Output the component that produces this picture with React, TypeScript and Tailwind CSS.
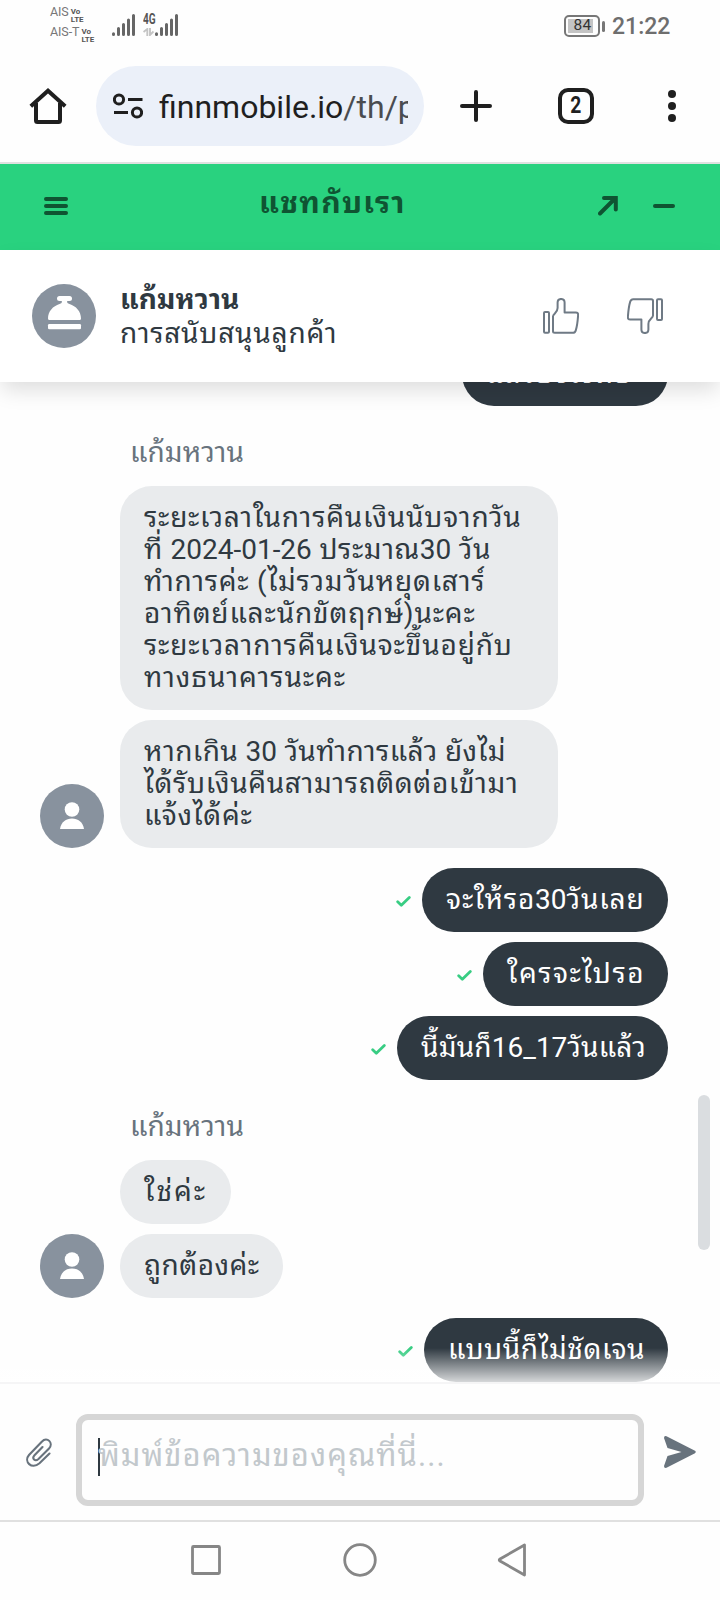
import React from "react";

function Signal() {
  return (
    <svg className="block h-[22px] w-[23px]" viewBox="0 0 23 22" stroke="#666" strokeWidth="3" strokeLinecap="round">
      <path d="M1.500 19.800v.7M6.500 14.500v6M11.500 10.500v10M16.500 6v14.500M21.500 1.500v19" />
    </svg>
  );
}

function Carrier({ name }: { name: string }) {
  return (
    <div className="flex h-5 items-start">
      <span className="text-[12.500px] leading-4 tracking-[-0.1px]">{name}</span>
      <span className="ml-[2px] pt-1 text-[8px] font-bold leading-[7.500px] text-[#555]">
        <span className="block">Vo</span>
        <span className="block">LTE</span>
      </span>
    </div>
  );
}

function StatusBar() {
  return (
    <div className="flex h-12 items-start pl-[50px] text-[#777]">
      <div className="w-[62px] pt-1">
        <Carrier name="AIS" />
        <Carrier name="AIS-T" />
      </div>
      <div className="mt-[14px]">
        <Signal />
      </div>
      <div className="ml-2 mt-[13px] w-3">
        <div className="h-3 origin-left scale-x-[0.72] text-[14px] font-bold leading-3 text-[#555]">4G</div>
        <svg className="mt-[3px] block h-2 w-[11px]" viewBox="0 0 11 8" fill="none" stroke="#c4c4c4" strokeWidth="1.900">
          <path d="M4.300 8V1L.5 4M7 0v7l3.500-3.500" />
        </svg>
      </div>
      <div className="mt-[14px]">
        <Signal />
      </div>
      <div className="ml-[386px] mt-[15px] flex items-center">
        <div className="flex h-[22px] w-9 rounded-[5px] border-2 border-[#777] p-[2px]">
          <div className="flex h-[14px] w-[25px] items-center justify-center bg-[#c4c4c4] pl-1 text-[15.500px] tracking-[0.4px] text-[#333]">84</div>
        </div>
        <div className="ml-[2px] h-[11px] w-[3px] rounded bg-[#777]" />
      </div>
      <div className="ml-[7px] mt-[13px] text-[23px] font-medium leading-[27px] text-[#6e6e6e]">21:22</div>
    </div>
  );
}

function Toolbar() {
  return (
    <div className="flex h-[114px] items-start pt-[18px]">
      <svg className="ml-[28px] mt-5 h-10 w-10" viewBox="0 0 40 40" fill="none" stroke="#1f1f1f" strokeWidth="4" strokeLinejoin="round">
        <path d="M8 17v17.500q0 1.500 1.500 1.500h21q1.500 0 1.500-1.500V17" />
        <path d="M2.800 20.200 20 4.800l17.200 15.400" strokeLinejoin="miter" />
      </svg>
      <div className="ml-7 flex h-20 w-[328px] items-center rounded-full bg-[#ebf0f9] pl-[17px]">
        <svg className="h-[26px] w-[30px]" viewBox="0 0 30 26" fill="none" stroke="#1f1f1f" strokeWidth="3">
          <circle cx="6" cy="6.500" r="4.600" />
          <path d="M15 6.500h14.500M1 19.500h14" />
          <circle cx="24" cy="19.500" r="4.600" />
        </svg>
        <div className="ml-4 mt-0.5 w-[249px] overflow-hidden whitespace-nowrap text-[32px] leading-[42px] text-[#1f1f1f]">
          finnmobile.io<span className="text-[#4a4c50]">/th/p</span>
        </div>
      </div>
      <svg className="ml-9 mt-6 h-8 w-8" viewBox="0 0 32 32" stroke="#1f1f1f" strokeWidth="4" strokeLinecap="round">
        <path d="M16 2v28M2 16h28" />
      </svg>
      <div className="ml-[66px] mt-[22px] flex h-9 w-9 items-center justify-center rounded-[10px] border-4 border-[#1f1f1f] text-[23.500px] font-bold text-[#1f1f1f]">
        <span className="scale-x-[0.82]">2</span>
      </div>
      <svg className="ml-[74px] mt-[22px] h-9 w-2" viewBox="0 0 8 36" fill="#1f1f1f">
        <circle cx="4" cy="6" r="4" />
        <circle cx="4" cy="18" r="4" />
        <circle cx="4" cy="30" r="4" />
      </svg>
    </div>
  );
}

function ChatHeader() {
  return (
    <div className="flex h-[86px] bg-[#29d27f] pl-11 text-[#0f5432]">
      <svg className="mt-[33px] h-[18px] w-6" viewBox="0 0 24 18" stroke="currentColor" strokeWidth="4" strokeLinecap="round">
        <path d="M2 2h20M2 9h20M2 16h20" />
      </svg>
      <div className="ml-[191px] mt-[19px] w-[145px] whitespace-nowrap text-[30px] font-bold leading-10 tracking-[1.3px]">แชทกับเรา</div>
      <svg className="ml-[194px] mt-8 h-5 w-5" viewBox="0 0 20 20" fill="none" stroke="currentColor" strokeWidth="4" strokeLinecap="round">
        <path d="M2 17.500 17.500 2M6 2h11.800v11.500" />
      </svg>
      <svg className="ml-[35px] mt-10 h-1 w-[22px]" viewBox="0 0 22 4" stroke="currentColor" strokeWidth="4" strokeLinecap="round">
        <path d="M2 2h18" />
      </svg>
    </div>
  );
}

function Thumb({ down = false }: { down?: boolean }) {
  return (
    <svg className={down ? "h-9 w-9 rotate-180" : "h-9 w-9"} viewBox="0 0 36 36" fill="none" stroke="#6f7a85" strokeWidth="2" strokeLinejoin="round">
      <rect x="1" y="14" width="5" height="20.800" rx="1" />
      <path d="M10 33.300V18.500c0-3 4.600-3.500 4.600-8.500V4.500c0-4.700 7-4.700 7 0V14.500H32.800c1.800 0 2.400 1 2.300 2.700-.4 6-1 11-2.400 15.400-.5 1.500-1.400 2.200-2.900 2.200H11.800c-1.300 0-1.800-.4-1.800-1.500z" />
    </svg>
  );
}

function AgentBar() {
  return (
    <div className="relative z-10 flex h-[132px] items-start bg-white pl-8 shadow-[0_10px_20px_-2px_rgba(0,0,0,0.13)]">
      <svg className="mt-[34px] h-16 w-16" viewBox="0 0 64 64">
        <circle cx="32" cy="32" r="32" fill="#88929e" />
        <g fill="#fff">
          <rect x="25" y="12" width="15" height="5" rx="2.500" />
          <path d="M29.500 16.500h6l-.5 1.500q.3 1.300 2.500 2C44 22 49 27.500 49 34.500q0 1.500-1.500 1.500h-30Q16 36 16 34.500C16 27.500 21 22 27.500 20q2.200-.7 2.500-2z" />
          <rect x="16" y="40" width="33" height="5.300" rx="1.300" />
        </g>
      </svg>
      <div className="ml-6 mt-[33px] w-[423px] whitespace-nowrap text-[28px] leading-[34px] text-[#2f3941]">
        <div className="font-bold tracking-[0.1px]">แก้มหวาน</div>
        <div className="tracking-[0.78px]">การสนับสนุนลูกค้า</div>
      </div>
      <div className="mt-12 flex gap-12">
        <Thumb />
        <Thumb down />
      </div>
    </div>
  );
}

function Person() {
  return (
    <svg className="h-16 w-16 shrink-0" viewBox="0 0 64 64">
      <circle cx="32" cy="32" r="32" fill="#88929e" />
      <circle cx="32" cy="25.500" r="7.300" fill="#fff" />
      <path d="M20 45c1-7 6-10.500 12-10.500S43 38 44 45z" fill="#fff" />
    </svg>
  );
}

interface Line {
  text: string;
  tracking: string;
}

/* Thai glyphs are tracked slightly wider than Latin digits. */
function Mixed({ text, tracking }: Line) {
  return (
    <div className={`h-8 ${tracking}`}>
      {text.split(/([0-9_-]+)/).map((part, i) => (
        <span key={i} className={i % 2 ? "tracking-normal" : ""}>{part}</span>
      ))}
    </div>
  );
}

function Incoming({ lines, width, avatar = false }: { lines: Line[]; width: string; avatar?: boolean }) {
  return (
    <div className="mb-[10px] flex items-end gap-4 pl-10">
      {avatar ? <Person /> : <div className="w-16" />}
      <div className={`${width} whitespace-nowrap rounded-[32px] bg-[#e9ebed] px-6 py-4 text-[#2f3941]`}>
        {lines.map((line) => (
          <Mixed key={line.text} {...line} />
        ))}
      </div>
    </div>
  );
}

function Outgoing({ text, tracking, width }: Line & { width: string }) {
  return (
    <div className="mb-[10px] flex h-16 items-center justify-end pr-[52px]">
      <svg className="mr-[11px] mt-[3px] h-[11px] w-[15px]" viewBox="0 0 15 11" fill="none" stroke="#38cd83" strokeWidth="2.800" strokeLinecap="round" strokeLinejoin="round">
        <path d="M1.700 5.800 5.300 9.300 13.300 1.500" />
      </svg>
      <div className={`${width} h-16 whitespace-nowrap rounded-full bg-[#2f3941] px-6 py-4 text-white`}>
        <Mixed text={text} tracking={tracking} />
      </div>
    </div>
  );
}

function Sender() {
  return <div className="h-[70px] pl-[130px] pt-[21px] tracking-[0.1px] text-[#68737d]">แก้มหวาน</div>;
}

function Conversation() {
  return (
    <div className="relative h-[1000px] overflow-hidden text-[28px] leading-8">
      <div className="-mt-10">
        <Outgoing text="แล้วยังไงต่อ" tracking="tracking-[1px]" width="w-[206px]" />
      </div>
      <Sender />
      <Incoming
        width="w-[438px]"
        lines={[
          { text: "ระยะเวลาในการคืนเงินนับจากวัน", tracking: "tracking-[0.8px]" },
          { text: "ที่ 2024-01-26 ประมาณ30 วัน", tracking: "tracking-[0.6px]" },
          { text: "ทำการค่ะ (ไม่รวมวันหยุดเสาร์", tracking: "tracking-[0.76px]" },
          { text: "อาทิตย์และนักขัตฤกษ์)นะคะ", tracking: "tracking-[0.83px]" },
          { text: "ระยะเวลาการคืนเงินจะขึ้นอยู่กับ", tracking: "tracking-[0.84px]" },
          { text: "ทางธนาคารนะคะ", tracking: "tracking-[0.95px]" },
        ]}
      />
      <Incoming
        avatar
        width="w-[438px]"
        lines={[
          { text: "หากเกิน 30 วันทำการแล้ว ยังไม่", tracking: "tracking-[0.43px]" },
          { text: "ได้รับเงินคืนสามารถติดต่อเข้ามา", tracking: "tracking-[0.64px]" },
          { text: "แจ้งได้ค่ะ", tracking: "tracking-[0.72px]" },
        ]}
      />
      <div className="h-[10px]" />
      <Outgoing text="จะให้รอ30วันเลย" tracking="tracking-[0.85px]" width="w-[246px]" />
      <Outgoing text="ใครจะไปรอ" tracking="tracking-[1.5px]" width="w-[185px]" />
      <Outgoing text="นี้มันก็16_17วันแล้ว" tracking="tracking-[0.2px]" width="w-[271px]" />
      <Sender />
      <Incoming width="w-[111px]" lines={[{ text: "ใช่ค่ะ", tracking: "tracking-[2px]" }]} />
      <Incoming avatar width="w-[163px]" lines={[{ text: "ถูกต้องค่ะ", tracking: "tracking-[0.5px]" }]} />
      <div className="h-[10px]" />
      <Outgoing text="แบบนี้ก็ไม่ชัดเจน" tracking="tracking-[0.55px]" width="w-[244px]" />
      <div className="absolute inset-x-0 bottom-0 h-[34px] bg-linear-to-b from-white/0 to-white/80" />
      <div className="absolute right-[10px] top-[713px] h-[155px] w-3 rounded-full bg-[#dadde0]" />
    </div>
  );
}

function Composer() {
  return (
    <div className="flex h-[138px] border-t-2 border-[#f5f5f6] pl-[26px]">
      <svg className="mt-[53px] h-[30px] w-[26px]" viewBox="0 0 26 30" fill="none" stroke="#68737d" strokeWidth="2.100" strokeLinecap="round">
        <path d="M23.500 16.500 13.500 26.300C5.500 33 -2.500 24.500 3 18L16 4.500C21 -1 28 6 23 11.500L12.500 22C9 25 5.500 21.500 8.500 18.300L16.500 10" />
      </svg>
      <div className="ml-6 mt-[30px] flex h-[92px] w-[568px] items-start rounded-xl border-[6px] border-[#d6d6d6] pl-4">
        <div className="mt-[18px] h-[38px] w-0.5 bg-[#2f3941]" />
        <div className="-ml-0.5 mt-4 whitespace-nowrap text-[31px] leading-10 tracking-[1.05px] text-[#c2c8cc]">พิมพ์ข้อความของคุณที่นี่...</div>
      </div>
      <svg className="ml-5 mt-[52px] h-8 w-8" viewBox="0 0 32 32" fill="#68737d">
        <path d="M2.500.3 31 14.800q1.500 1.200 0 2.400L2.500 31.800Q0 32.500 0 30L3.500 20l14-4L3.500 12 0 2Q0-.5 2.500.3z" />
      </svg>
    </div>
  );
}

function NavBar() {
  return (
    <div className="flex h-20 items-start border-t-2 border-[#e0e0e0] pl-[191px] pt-5">
      <svg className="h-9 w-[336px]" viewBox="0 0 336 36" fill="none" stroke="#868686" strokeWidth="2.800" strokeLinejoin="round">
        <rect x="1.500" y="4.500" width="27" height="27" rx="1" />
        <circle cx="169" cy="18" r="15.300" />
        <path d="M309 17 333.500 3v30L309 19q-1.500-1 0-2z" />
      </svg>
    </div>
  );
}

export default function App() {
  return (
    <div className="h-[1600px] w-[720px] overflow-hidden bg-[#fefefe] font-['Roboto','Noto_Sans_Thai_Looped','Noto_Sans',sans-serif]">
      <StatusBar />
      <Toolbar />
      <div className="h-0.5 bg-[#dfe1e0]" />
      <ChatHeader />
      <AgentBar />
      <Conversation />
      <Composer />
      <NavBar />
    </div>
  );
}
